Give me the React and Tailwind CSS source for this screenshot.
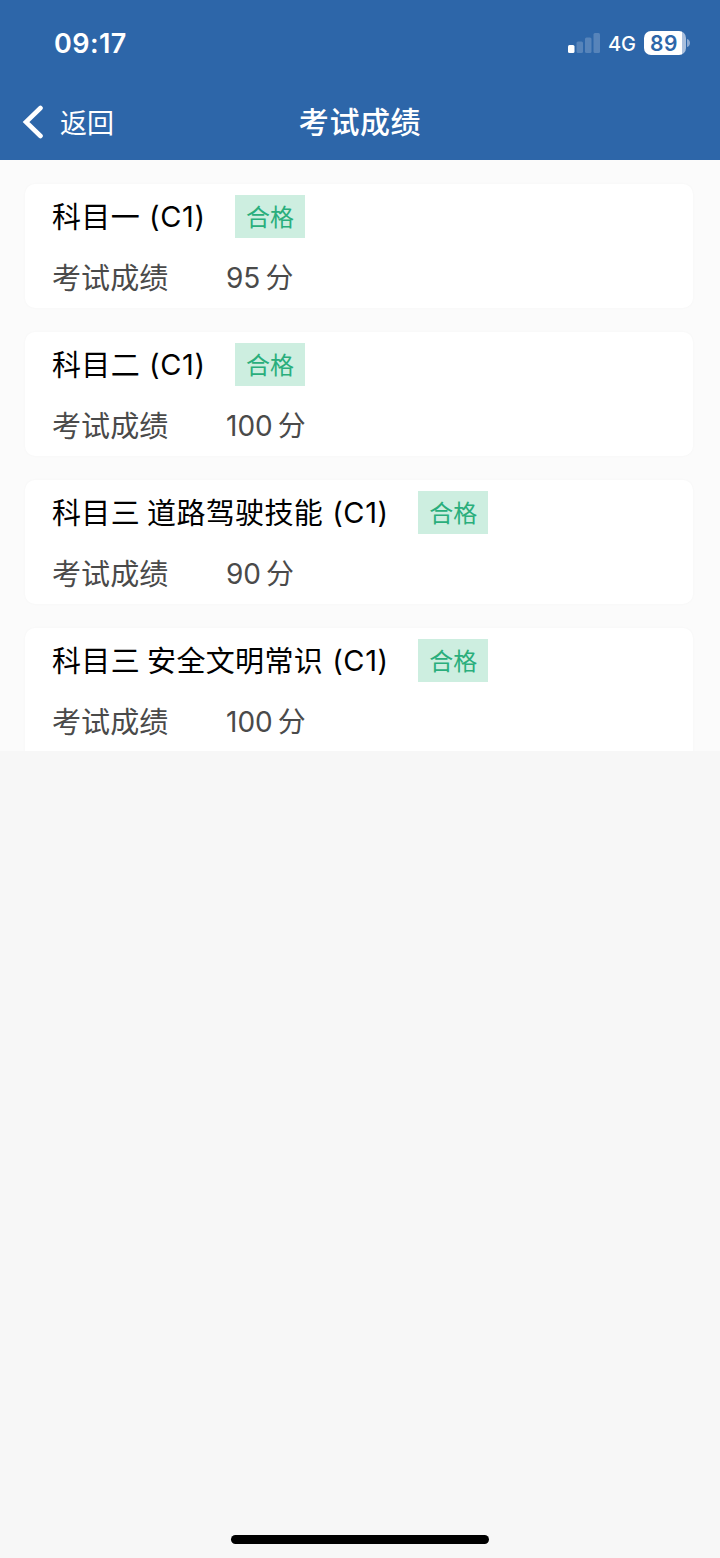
import React from 'react';

const resultados = [
  { id: 1, materia: '科目一', puntos: 95 },
  { id: 2, materia: '科目二', puntos: 100 },
  { id: 3, materia: '科目三 道路驾驶技能', puntos: 90 },
  { id: 4, materia: '科目三 安全文明常识', puntos: 100 },
];

function StatusBar() {
  return (
    <div className="flex h-[87px] items-center justify-between pl-[54px] pr-[29px]">
      <span className="text-[27px] font-semibold leading-none tracking-[0.4px]">09:17</span>
      <div className="flex items-center pb-[2px]">
        <svg width="33" height="20" viewBox="0 0 33 20" className="mr-[7px]">
          <rect x="0" y="12" width="6.5" height="8" rx="1.5" fill="#fff" />
          <rect x="8.5" y="8.5" width="6.5" height="11.5" rx="1.5" fill="#fff" opacity="0.2" />
          <rect x="17" y="4.5" width="6.5" height="15.5" rx="1.5" fill="#fff" opacity="0.2" />
          <rect x="25.5" y="0" width="6.5" height="20" rx="1.5" fill="#fff" opacity="0.2" />
        </svg>
        <span className="mr-[8px] pt-[3px] text-[20px] font-medium leading-none">4G</span>
        <div className="flex h-6 w-[42px] items-center justify-center rounded-[7px] bg-gradient-to-r from-white from-90% to-[#a9bfdd] to-90% pr-[2px] pt-[2px] text-[21px] font-semibold leading-none tracking-[0.5px] text-[#2d66a9]">
          89
        </div>
        <svg width="4" height="8" viewBox="0 0 4 8" className="ml-[1px]">
          <path d="M0 0C4 1 4 7 0 8Z" fill="#8eabd2" />
        </svg>
      </div>
    </div>
  );
}

function NavBar() {
  return (
    <div className="grid h-[70px] grid-cols-[1fr_auto_1fr] items-center">
      <div className="flex items-center pl-[22px]">
        <svg width="23" height="34" viewBox="0 0 23 34" fill="none" stroke="#fff" strokeWidth="4.6" strokeLinecap="round" strokeLinejoin="miter">
          <path d="M18.5 3L4 17L18.5 31" />
        </svg>
        <span className="ml-[15px] pt-[2px] text-[27px] leading-none">返回</span>
      </div>
      <h1 className="pb-px text-[30px] font-medium leading-none tracking-[0.6px]">考试成绩</h1>
    </div>
  );
}

function ResultCard({ materia, puntos }) {
  return (
    <div className="min-h-[124px] shrink-0 rounded-[10px] bg-white pl-[27px] pt-[11px] shadow-[0_0_3px_rgba(0,0,0,0.03)] last:min-h-[140px]">
      <div className="flex h-[43px] items-center text-black">
        <h2 className="pt-[2px] text-[29px] leading-none tracking-[0.35px] [word-spacing:-1.5px]">{materia}</h2>
        <span className="ml-[9px] w-[57px] text-[29px] leading-none tracking-[0.6px]">(C1)</span>
        <span className="ml-[29px] flex h-[43px] w-[70px] items-center justify-center bg-[#cdeee0] pt-[2px] text-[24px] leading-none text-[#2aae7c]">
          合格
        </span>
      </div>
      <div className="mt-[19px] flex h-[42px] items-center text-[28px] leading-none text-[#4a4a4a]">
        <span className="w-[174px] text-[29px] tracking-[0.1px]">考试成绩</span>
        <span>{puntos}</span>
        <span className="ml-[5px]">分</span>
      </div>
    </div>
  );
}

export default function App() {
  return (
    <div className="flex h-[1558px] w-[720px] flex-col bg-[#f7f7f7] font-['Inter','Noto_Sans_CJK_SC',sans-serif]">
      <header className="h-[160px] bg-[#2d66a9] text-white">
        <StatusBar />
        <NavBar />
      </header>

      {/* Lista de resultados */}
      <main className="flex h-[591px] flex-col gap-6 overflow-hidden bg-[#fbfbfb] pl-[25px] pr-[27px] pt-6">
        {resultados.map((r) => (
          <ResultCard key={r.id} materia={r.materia} puntos={r.puntos} />
        ))}
      </main>

      {/* Indicador de inicio */}
      <div className="mx-auto mb-[14px] mt-auto h-[9px] w-[258px] rounded-full bg-black" />
    </div>
  );
}
